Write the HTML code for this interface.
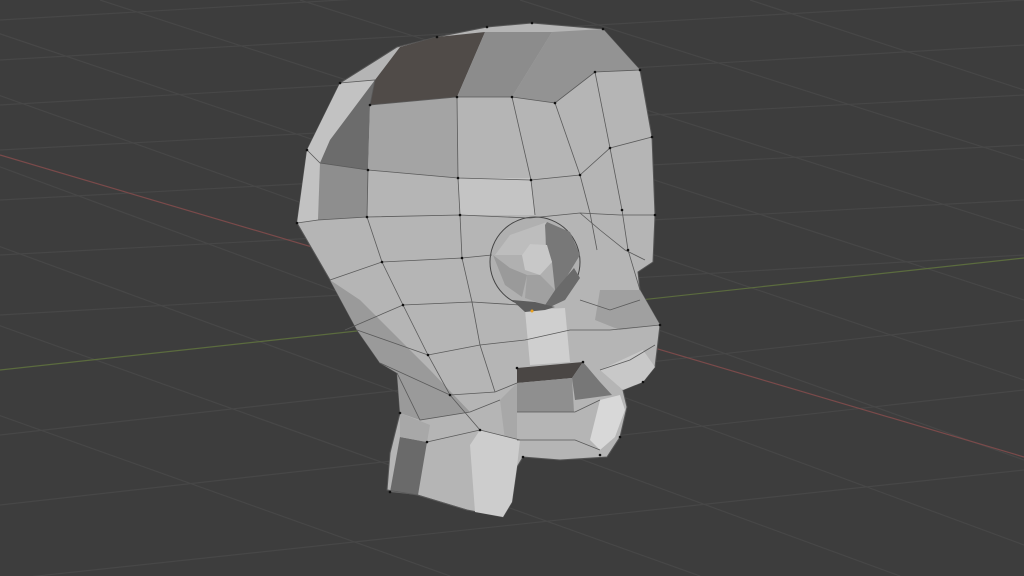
<!DOCTYPE html>
<html><head><style>
html,body{margin:0;padding:0;background:#3d3d3d;width:1024px;height:576px;overflow:hidden}
svg{display:block}
</style></head><body>
<svg width="1024" height="576" viewBox="0 0 1024 576" xmlns="http://www.w3.org/2000/svg">
<rect width="1024" height="576" fill="#3d3d3d"/>
<g stroke="#474747" stroke-width="1.2" fill="none">
<line x1="0" y1="20" x2="1024" y2="-40"/>
<line x1="0" y1="60" x2="1024" y2="0"/>
<line x1="0" y1="105" x2="1024" y2="45"/>
<line x1="0" y1="150" x2="1024" y2="95"/>
<line x1="0" y1="200" x2="1024" y2="145"/>
<line x1="0" y1="255" x2="1024" y2="200"/>
<line x1="0" y1="315" x2="1024" y2="255"/>
<line x1="0" y1="435" x2="1024" y2="320"/>
<line x1="0" y1="505" x2="1024" y2="390"/>
<line x1="0" y1="580" x2="1024" y2="470"/>
<line x1="-100" y1="0" x2="1024" y2="380"/>
<line x1="-100" y1="60" x2="1024" y2="460"/>
<line x1="-100" y1="130" x2="1024" y2="545"/>
<line x1="-100" y1="210" x2="900" y2="576"/>
<line x1="-100" y1="290" x2="700" y2="576"/>
<line x1="-100" y1="380" x2="450" y2="576"/>
<line x1="100" y1="0" x2="1024" y2="300"/>
<line x1="300" y1="0" x2="1024" y2="230"/>
<line x1="520" y1="0" x2="1024" y2="160"/>
<line x1="750" y1="0" x2="1024" y2="90"/>
</g>
<line x1="0" y1="155" x2="1024" y2="457" stroke="#7a4a4a" stroke-width="1.2"/>
<line x1="0" y1="370" x2="1024" y2="258" stroke="#5b6b3e" stroke-width="1.2"/>
<polygon fill="#b5b5b5" stroke="#555" stroke-width="1" points="437,37 487,27 532,23 603,29 640,70 652,137 655,215 653,262 638,272 640,290 660,325 655,367 643,382 623,390 627,407 620,437 607,457 560,460 523,457 517,467 512,502 503,517 467,510 417,495 387,490 390,453 400,413 397,373 380,363 357,330 330,280 297,223 307,150 340,83 397,47"/>
<polygon fill="#c2c2c2" points="297,223 307,150 340,83 375,80 330,140 320,163 318,220"/>
<polygon fill="#504b48" points="370,105 457,97 485,32 437,37 400,47 375,80"/>
<polygon fill="#8c8c8c" points="457,97 512,97 552,32 485,32"/>
<polygon fill="#939393" points="552,32 603,29 640,70 595,72 555,103 512,97"/>
<polygon fill="#6c6c6c" points="370,105 368,170 320,163 330,140 375,80"/>
<polygon fill="#8e8e8e" points="320,163 368,170 367,217 318,220"/>
<polygon fill="#a4a4a4" points="370,105 457,97 458,178 368,170"/>
<polygon fill="#c4c4c4" points="458,178 530,178 535,215 460,215"/>
<polygon fill="#9a9a9a" points="330,280 357,330 380,363 397,373 400,413 420,420 470,412 430,370 395,335 360,300"/>
<polygon fill="#cfcfcf" points="525,310 565,308 570,362 530,365"/>
<polygon fill="#a0a0a0" points="600,290 640,290 660,325 620,330 595,320"/>
<polygon fill="#c8c8c8" points="600,370 643,350 655,367 643,382 623,390"/>
<!-- eye -->
<circle cx="535" cy="262" r="45" fill="#b0b0b0" stroke="#444" stroke-width="1"/>
<polygon fill="#bdbdbd" points="510,235 547,222 545,245 530,244 522,255 495,255"/>
<polygon fill="#787878" points="547,222 570,232 580,255 566,278 555,290 552,262 546,245 545,225"/>
<polygon fill="#6a6a6a" points="574,268 580,278 565,300 550,307 545,305 555,290"/>
<polygon fill="#9a9a9a" points="493,255 505,285 522,297 527,275 510,268"/>
<polygon fill="#c8c8c8" points="530,244 547,245 552,262 540,275 525,270 522,255"/>
<polygon fill="#a0a0a0" points="527,275 540,275 555,290 545,305 525,298"/>
<polygon fill="#5c5c5c" points="512,300 525,312 545,310 555,307 535,302"/>
<!-- mouth -->
<polygon fill="#4a4644" points="517,368 583,362 572,378 517,383"/>
<polygon fill="#8f8f8f" points="517,383 572,378 574,412 517,412"/>
<polygon fill="#777" points="583,362 600,382 612,395 575,400 572,378"/>
<polygon fill="#d8d8d8" points="600,400 620,395 625,410 615,437 600,450 590,440"/>
<polygon fill="#a8a8a8" points="500,400 517,383 517,440 505,440"/>
<!-- neck -->
<polygon fill="#6a6a6a" points="400,437 427,442 418,495 390,492"/>
<polygon fill="#cdcdcd" points="480,430 520,440 517,467 512,502 503,517 475,512 470,445"/>
<polygon fill="#a8a8a8" points="400,413 430,425 427,442 400,437"/>
<g stroke="#5a5a5a" stroke-width="0.8" fill="none">
<polyline points="297,223 318,220 367,217 460,215 530,218 580,213 620,215 655,215"/>
<polyline points="307,150 320,163 368,170 458,178 531,180 580,175 610,148 652,137"/>
<polyline points="340,83 375,80 370,105 457,97 512,97 555,103 595,72 640,70"/>
<polyline points="457,97 458,178 460,215 462,258 472,302 480,345 495,392"/>
<polyline points="368,170 367,217 382,262 403,305 428,355 450,395 480,430"/>
<polyline points="512,97 531,180 535,215"/>
<polyline points="555,103 580,175 590,213 597,250"/>
<polyline points="595,72 610,148 622,210 628,250 640,290"/>
<polyline points="330,280 382,262 462,258 492,255"/>
<polyline points="345,330 403,305 472,302 520,305"/>
<polyline points="357,330 428,355 480,345 525,340 570,330 610,330 660,325"/>
<polyline points="380,363 450,395 495,392 517,383"/>
<polyline points="397,373 420,420 470,412 500,400"/>
<polyline points="517,412 575,412 600,400"/>
<polyline points="517,440 575,440 600,450"/>
<polyline points="427,442 480,430 520,440"/>
<polyline points="387,490 418,495 467,510"/>
<polyline points="580,213 600,230 625,250 645,260"/>
<polyline points="580,300 610,310 640,300"/>
<polyline points="600,370 630,360 655,345"/>
</g>
<g fill="#111">
<circle cx="437" cy="37" r="1.3"/><circle cx="487" cy="27" r="1.3"/><circle cx="532" cy="23" r="1.3"/><circle cx="603" cy="29" r="1.3"/><circle cx="640" cy="70" r="1.3"/><circle cx="652" cy="137" r="1.3"/><circle cx="655" cy="215" r="1.3"/><circle cx="307" cy="150" r="1.3"/><circle cx="297" cy="223" r="1.3"/><circle cx="340" cy="83" r="1.3"/><circle cx="370" cy="105" r="1.3"/><circle cx="457" cy="97" r="1.3"/><circle cx="512" cy="97" r="1.3"/><circle cx="555" cy="103" r="1.3"/><circle cx="595" cy="72" r="1.3"/><circle cx="368" cy="170" r="1.3"/><circle cx="458" cy="178" r="1.3"/><circle cx="531" cy="180" r="1.3"/><circle cx="580" cy="175" r="1.3"/><circle cx="610" cy="148" r="1.3"/><circle cx="367" cy="217" r="1.3"/><circle cx="460" cy="215" r="1.3"/><circle cx="382" cy="262" r="1.3"/><circle cx="462" cy="258" r="1.3"/><circle cx="403" cy="305" r="1.3"/><circle cx="428" cy="355" r="1.3"/><circle cx="450" cy="395" r="1.3"/><circle cx="480" cy="430" r="1.3"/><circle cx="400" cy="413" r="1.3"/><circle cx="427" cy="442" r="1.3"/><circle cx="390" cy="492" r="1.3"/><circle cx="660" cy="325" r="1.3"/><circle cx="643" cy="382" r="1.3"/><circle cx="620" cy="437" r="1.3"/><circle cx="600" cy="455" r="1.3"/><circle cx="523" cy="457" r="1.3"/><circle cx="517" cy="368" r="1.3"/><circle cx="583" cy="362" r="1.3"/><circle cx="622" cy="210" r="1.3"/><circle cx="628" cy="250" r="1.3"/>
</g>
<circle cx="532" cy="311" r="1.5" fill="#e8a020"/>
</svg>
</body></html>
